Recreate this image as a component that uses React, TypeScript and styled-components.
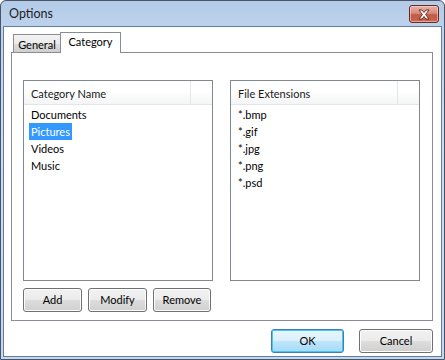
import React from "react";
import styled, { createGlobalStyle, css } from "styled-components";

const Global = createGlobalStyle`
  html, body { margin: 0; padding: 0; background: #ffffff; }
  body { font-family: "Segoe UI", Lato, "Noto Sans", sans-serif; font-size: 11px; color: #000; }
  * { box-sizing: border-box; }
`;

const Window = styled.div`
  width: 445px;
  height: 360px;
  border: 1px solid #4a5563;
  border-radius: 6px 6px 0 0;
  background: linear-gradient(180deg, #b3cbe8 0%, #bed3ec 8%, #c9dcf1 40%, #c3d8ef 100%);
  padding: 0 2px 2px 2px;
  display: flex;
  flex-direction: column;
  overflow: hidden;
`;

const TitleBar = styled.div`
  height: 25px;
  flex: none;
  display: flex;
  align-items: center;
  justify-content: space-between;
  padding: 0 3px 1px 6px;
`;

const Title = styled.span`
  font-size: 12.5px;
  color: #1e1e1e;
`;

const CloseBtn = styled.div`
  width: 30px;
  height: 18px;
  margin-top: 2px;
  border: 1px solid #6b2a20;
  border-radius: 3px;
  background: linear-gradient(180deg, #e8b0a6 0%, #d98a7b 45%, #c35a45 55%, #c9654f 100%);
  box-shadow: inset 0 0 0 1px rgba(255, 220, 210, 0.55);
  display: flex;
  align-items: center;
  justify-content: center;
`;

const Client = styled.div`
  flex: 1;
  background: #ffffff;
  border: 1px solid #5f7ea3;
  display: flex;
  flex-direction: column;
  padding: 5px 8px 3px 7px;
  min-height: 0;
`;

const TabStrip = styled.div`
  display: flex;
  align-items: flex-end;
  height: 20px;
  padding-left: 2px;
  position: relative;
  z-index: 1;
`;

const Tab = styled.div<{ $active?: boolean; $w: number }>`
  width: ${(p) => p.$w}px;
  border: 1px solid #898c95;
  border-bottom: none;
  display: flex;
  align-items: center;
  justify-content: center;
  color: #000;
  ${(p) =>
    p.$active
      ? css`
          height: 21px;
          margin-bottom: -1px;
          background: #ffffff;
          padding-bottom: 3px;
        `
      : css`
          height: 18px;
          background: linear-gradient(180deg, #f2f2f2 0%, #ebebeb 50%, #dddddd 51%, #cfcfcf 100%);
          border-right: none;
          padding-top: 2px;
        `}
`;

const Panel = styled.div`
  height: 269px;
  border: 1px solid #898c95;
  background: #ffffff;
  padding: 27px 11px 8px 11px;
  display: flex;
  flex-direction: column;
`;

const ListsRow = styled.div`
  display: flex;
  gap: 17px;
`;

const ListBox = styled.div`
  width: 190px;
  height: 201px;
  border: 1px solid #828790;
  background: #fff;
  display: flex;
  flex-direction: column;
`;

const Header = styled.div`
  height: 24px;
  display: flex;
  border-bottom: 1px solid #e5e5e5;
  background: linear-gradient(180deg, #ffffff 0%, #ffffff 40%, #f4f5f6 100%);
`;

const HeaderCell = styled.div<{ $w?: number }>`
  ${(p) => (p.$w ? `width: ${p.$w}px;` : "flex: 1;")}
  display: flex;
  align-items: center;
  padding-left: 7px;
  padding-top: 1px;
  border-right: ${(p) => (p.$w ? "1px solid #e3e5e8" : "none")};
  color: #1a1a1a;
`;

const Rows = styled.div`
  padding-top: 1px;
  display: flex;
  flex-direction: column;
`;

const Item = styled.div<{ $selected?: boolean }>`
  height: 17px;
  line-height: 17px;
  margin-left: 5px;
  padding: 0 2px;
  align-self: flex-start;
  background: ${(p) => (p.$selected ? "#3399ff" : "transparent")};
  color: ${(p) => (p.$selected ? "#ffffff" : "#000000")};
`;

const ButtonRow = styled.div`
  display: flex;
  gap: 6px;
  margin-top: 7px;
`;

const Button = styled.button<{ $w: number; $default?: boolean }>`
  width: ${(p) => p.$w}px;
  height: 24px;
  font-family: inherit;
  font-size: 11px;
  color: #000;
  border-radius: 3px;
  padding: 0 0 1px 0;
  ${(p) =>
    p.$default
      ? css`
          border: 1px solid #3c7fb1;
          background: linear-gradient(180deg, #eaf6fd 0%, #d9f0fc 50%, #bee6fd 51%, #a7d9f5 100%);
          box-shadow: inset 0 0 0 1px #48c6f3;
        `
      : css`
          border: 1px solid #707070;
          background: linear-gradient(180deg, #f2f2f2 0%, #ebebeb 50%, #dddddd 51%, #cfcfcf 100%);
          box-shadow: inset 0 0 0 1px #fcfcfc;
        `}
`;

const Footer = styled.div`
  display: flex;
  justify-content: flex-end;
  gap: 15px;
  margin-top: 8px;
`;

const CloseIcon = () => (
  <svg width="14" height="11" viewBox="0 0 14 11">
    <path
      d="M2 1 L5 1 L7 3.5 L9 1 L12 1 L8.6 5.5 L12 10 L9 10 L7 7.5 L5 10 L2 10 L5.4 5.5 Z"
      fill="#ffffff"
      stroke="#5a2219"
      strokeWidth="0.9"
      strokeLinejoin="round"
    />
  </svg>
);

const categories = ["Documents", "Pictures", "Videos", "Music"];
const extensions = ["*.bmp", "*.gif", "*.jpg", "*.png", "*.psd"];

export default function App() {
  return (
    <>
      <Global />
      <Window>
        <TitleBar>
          <Title>Options</Title>
          <CloseBtn>
            <CloseIcon />
          </CloseBtn>
        </TitleBar>
        <Client>
          <TabStrip>
            <Tab $w={47}>General</Tab>
            <Tab $w={61} $active>
              Category
            </Tab>
          </TabStrip>
          <Panel>
            <ListsRow>
              <ListBox>
                <Header>
                  <HeaderCell $w={167}>Category Name</HeaderCell>
                  <HeaderCell />
                </Header>
                <Rows>
                  {categories.map((c) => (
                    <Item key={c} $selected={c === "Pictures"}>
                      {c}
                    </Item>
                  ))}
                </Rows>
              </ListBox>
              <ListBox>
                <Header>
                  <HeaderCell $w={167}>File Extensions</HeaderCell>
                  <HeaderCell />
                </Header>
                <Rows>
                  {extensions.map((e) => (
                    <Item key={e}>{e}</Item>
                  ))}
                </Rows>
              </ListBox>
            </ListsRow>
            <ButtonRow>
              <Button $w={59}>Add</Button>
              <Button $w={59}>Modify</Button>
              <Button $w={58}>Remove</Button>
            </ButtonRow>
          </Panel>
          <Footer>
            <Button $w={73} $default>
              OK
            </Button>
            <Button $w={74}>Cancel</Button>
          </Footer>
        </Client>
      </Window>
    </>
  );
}
